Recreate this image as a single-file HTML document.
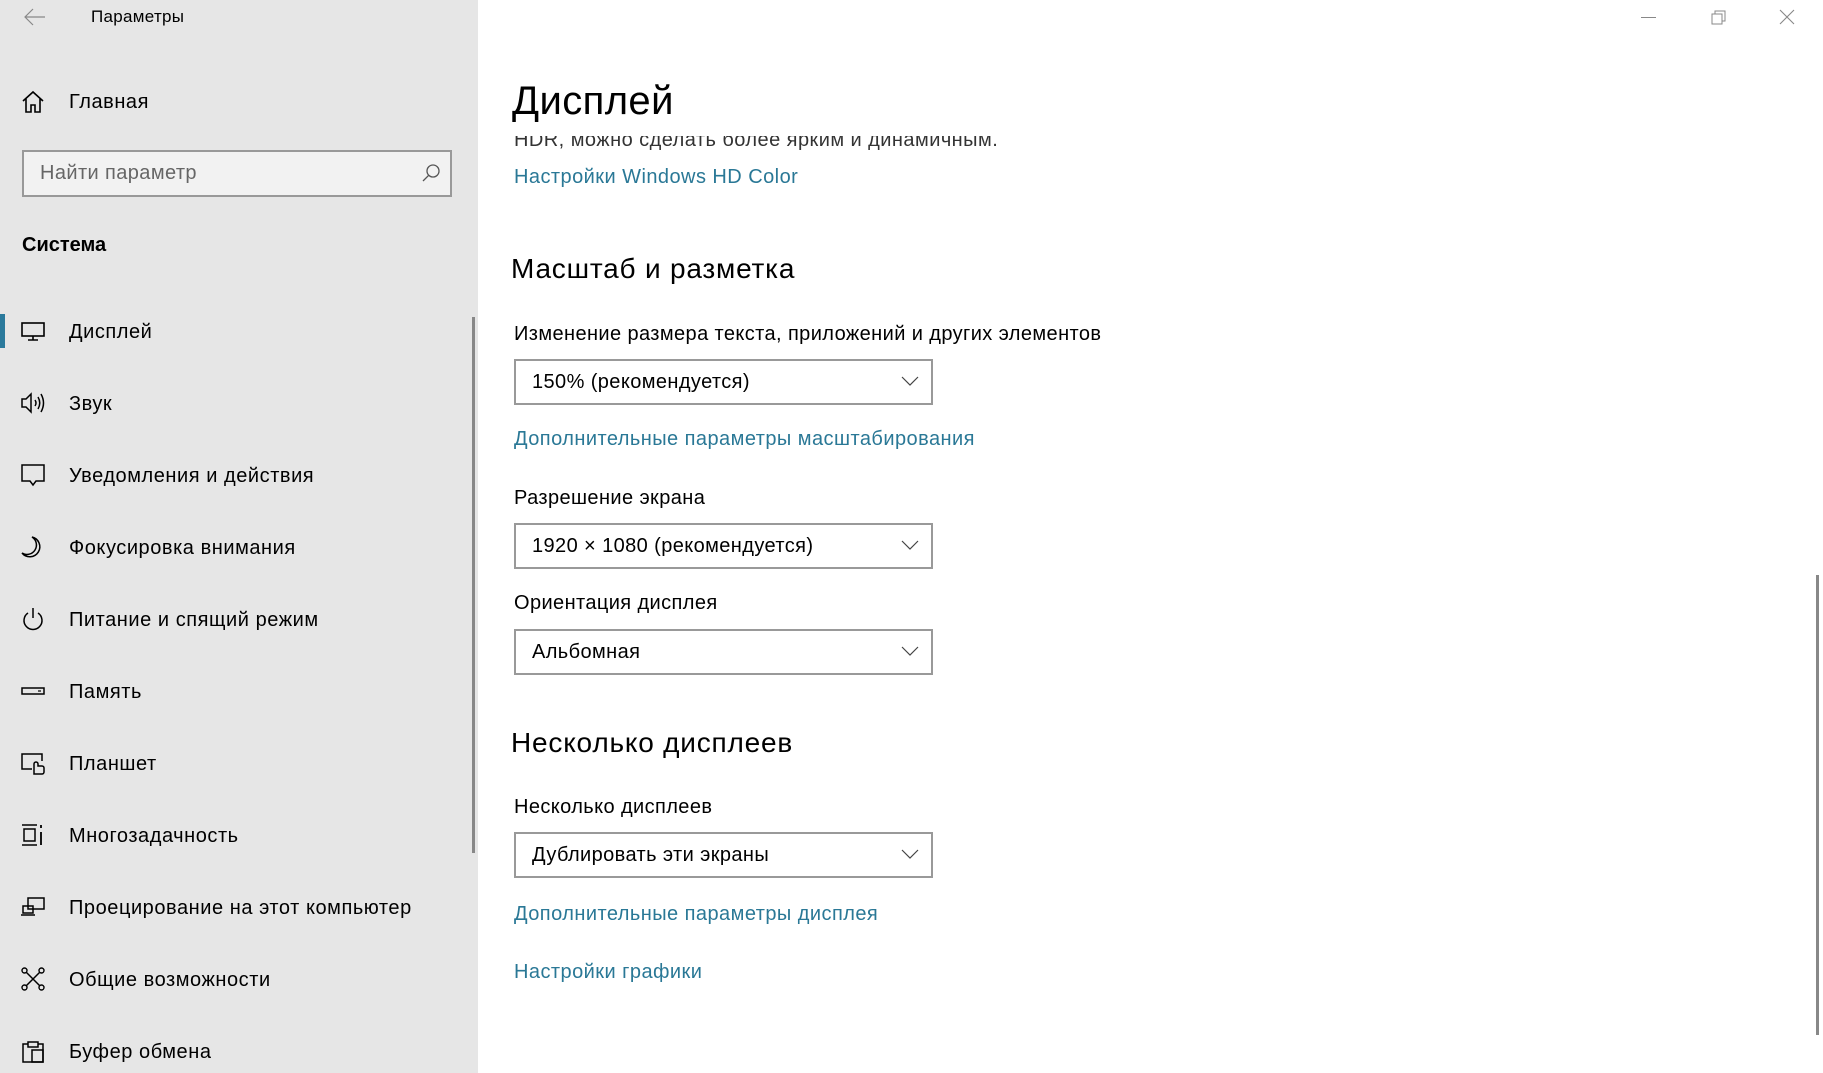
<!DOCTYPE html>
<html><head><meta charset="utf-8"><style>
*{margin:0;padding:0;box-sizing:border-box}
body{width:1823px;height:1073px;overflow:hidden;background:#fff;font-family:"Liberation Sans","DejaVu Sans",sans-serif;color:#000;position:relative}
.a{position:absolute;white-space:nowrap}
.c{line-height:30px;height:30px;margin-top:-15px}
#side{position:absolute;left:0;top:0;width:478px;height:1073px;background:#e6e6e6}
.nav{font-size:20px;left:69px;letter-spacing:0.55px}
.ic{position:absolute;left:20px;width:26px;height:26px;margin-top:-13px}
.link{color:#2a7896;font-size:20px;left:514px;letter-spacing:0.45px}
.lbl{font-size:20px;left:514px;color:#000;letter-spacing:0.4px}
.dd{position:absolute;left:514px;width:419px;height:46px;border:2.5px solid #999;background:#fff;font-size:20px;line-height:42px;padding-left:16px;letter-spacing:0.4px}
.dd svg{position:absolute;right:12px;top:14px}
.h2{font-size:28px;left:511px;letter-spacing:0.8px}
</style></head><body>
<div id="side">
  <svg class="a" style="left:24px;top:8px" width="22" height="18" viewBox="0 0 22 18"><path d="M1 9H21M9 1L1 9L9 17" fill="none" stroke="#888" stroke-width="1.2"/></svg>
  <div class="a c" style="left:91px;top:17px;font-size:17px;letter-spacing:0.3px">Параметры</div>

  <svg class="ic" style="top:102px" viewBox="0 0 26 26"><path d="M3 12L13 3L23 12M6 9.5V23H11V16H15V23H20V9.5" fill="none" stroke="#000" stroke-width="1.6"/></svg>
  <div class="a c nav" style="top:102px">Главная</div>

  <div class="a" style="left:22px;top:150px;width:430px;height:47px;border:2.5px solid #999;background:#f2f2f2"></div>
  <div class="a c" style="left:40px;top:173px;font-size:20px;color:#666;letter-spacing:0.4px">Найти параметр</div>
  <svg class="a" style="left:421px;top:163px" width="20" height="20" viewBox="0 0 20 20"><circle cx="12" cy="8" r="6" fill="none" stroke="#555" stroke-width="1.3"/><path d="M7.7 12.3L2 18" stroke="#555" stroke-width="1.3"/></svg>

  <div class="a c" style="left:22px;top:245px;font-size:20px;font-weight:bold">Система</div>

  <div class="a" style="left:0;top:314px;width:5px;height:34px;background:#2b7a9c"></div>
  <svg class="ic" style="top:331px" viewBox="0 0 26 26"><rect x="2" y="5" width="22" height="13" fill="none" stroke="#000" stroke-width="1.6"/><path d="M13 18V22M8 22H18" stroke="#000" stroke-width="1.6"/></svg>
  <div class="a c nav" style="top:332px">Дисплей</div>

  <svg class="ic" style="top:403px" viewBox="0 0 26 26"><path d="M2 9H6L11 4V22L6 17H2Z" fill="none" stroke="#000" stroke-width="1.5"/><path d="M15 10Q17 13 15 16M18 7Q21.5 13 18 19M21 4Q26 13 21 22" fill="none" stroke="#000" stroke-width="1.5"/></svg>
  <div class="a c nav" style="top:404px">Звук</div>

  <svg class="ic" style="top:475px" viewBox="0 0 26 26"><path d="M2 3H24V19H16L13 23L10 19H2Z" fill="none" stroke="#000" stroke-width="1.5"/></svg>
  <div class="a c nav" style="top:476px">Уведомления и действия</div>

  <svg class="ic" style="top:547px" viewBox="0 0 26 26"><path d="M12 3A10 10 0 1 1 2 19A9 9 0 0 0 12 3Z" fill="none" stroke="#000" stroke-width="1.5"/></svg>
  <div class="a c nav" style="top:548px">Фокусировка внимания</div>

  <svg class="ic" style="top:619px" viewBox="0 0 26 26"><path d="M8 7A9 9 0 1 0 18 7" fill="none" stroke="#000" stroke-width="1.5"/><path d="M13 2V12" stroke="#000" stroke-width="1.5"/></svg>
  <div class="a c nav" style="top:620px">Питание и спящий режим</div>

  <svg class="ic" style="top:691px" viewBox="0 0 26 26"><rect x="2" y="10" width="22" height="6" fill="none" stroke="#000" stroke-width="1.5"/><path d="M18 13H21" stroke="#000" stroke-width="1.2"/></svg>
  <div class="a c nav" style="top:692px">Память</div>

  <svg class="ic" style="top:763px" viewBox="0 0 26 26"><path d="M12 19H2V4H22V11" fill="none" stroke="#000" stroke-width="1.5"/><path d="M14 24V14A2 2 0 0 1 18 14V16H22A2 2 0 0 1 24 18V22A2 2 0 0 1 22 24Z" fill="none" stroke="#000" stroke-width="1.5"/></svg>
  <div class="a c nav" style="top:764px">Планшет</div>

  <svg class="ic" style="top:835px" viewBox="0 0 26 26"><path d="M2 3H17M2 23H17M4 7H15V19H4Z" fill="none" stroke="#000" stroke-width="1.5"/><path d="M21 3V6M21 10V23" stroke="#000" stroke-width="1.8"/></svg>
  <div class="a c nav" style="top:836px">Многозадачность</div>

  <svg class="ic" style="top:907px" viewBox="0 0 26 26"><rect x="8" y="4" width="16" height="11" fill="none" stroke="#000" stroke-width="1.5"/><path d="M3 12H13V19H3ZM1 21H15" fill="none" stroke="#000" stroke-width="1.5"/></svg>
  <div class="a c nav" style="top:908px">Проецирование на этот компьютер</div>

  <svg class="ic" style="top:979px" viewBox="0 0 26 26"><path d="M6 6L20 20M20 6L6 20" stroke="#000" stroke-width="1.5"/><circle cx="4.5" cy="4.5" r="2.5" fill="#e6e6e6" stroke="#000" stroke-width="1.4"/><circle cx="21.5" cy="4.5" r="2.5" fill="#e6e6e6" stroke="#000" stroke-width="1.4"/><circle cx="4.5" cy="21.5" r="2.5" fill="#e6e6e6" stroke="#000" stroke-width="1.4"/><circle cx="21.5" cy="21.5" r="2.5" fill="#e6e6e6" stroke="#000" stroke-width="1.4"/></svg>
  <div class="a c nav" style="top:980px">Общие возможности</div>

  <svg class="ic" style="top:1051px" viewBox="0 0 26 26"><path d="M8 6H3V24H23V6H18M8 4H18V9H8Z" fill="none" stroke="#000" stroke-width="1.5"/><path d="M12 12H23V24H12Z" fill="none" stroke="#000" stroke-width="1.5"/></svg>
  <div class="a c nav" style="top:1052px">Буфер обмена</div>

  <div class="a" style="left:472px;top:317px;width:3px;height:536px;background:#888"></div>
</div>

<div class="a" style="left:1641px;top:17px;width:15px;height:1px;background:#888"></div>
<svg class="a" style="left:1711px;top:10px" width="15" height="15" viewBox="0 0 15 15"><rect x="1" y="4" width="10" height="10" fill="none" stroke="#888"/><path d="M4 4V1H14V11H11" fill="none" stroke="#888"/></svg>
<svg class="a" style="left:1779px;top:9px" width="16" height="16" viewBox="0 0 16 16"><path d="M1 1L15 15M15 1L1 15" stroke="#888" stroke-width="1.1"/></svg>

<div class="a" style="left:514px;top:136px;width:600px;height:18px;overflow:hidden">
  <div class="a" style="left:0;top:-9px;font-size:20px;color:#333;line-height:26px;letter-spacing:0.45px">HDR, можно сделать более ярким и динамичным.</div>
</div>
<div class="a" style="left:512px;top:76px;font-size:40px;line-height:50px;letter-spacing:0.4px">Дисплей</div>
<div class="a c link" style="top:177px">Настройки Windows HD Color</div>

<div class="a c h2" style="top:269px">Масштаб и разметка</div>
<div class="a c lbl" style="top:334px">Изменение размера текста, приложений и других элементов</div>
<div class="dd" style="top:359px">150% (рекомендуется)<svg width="18" height="12" viewBox="0 0 18 12"><path d="M1 2L9 10L17 2" fill="none" stroke="#444" stroke-width="1.2"/></svg></div>
<div class="a c link" style="top:439px">Дополнительные параметры масштабирования</div>

<div class="a c lbl" style="top:498px">Разрешение экрана</div>
<div class="dd" style="top:523px">1920 × 1080 (рекомендуется)<svg width="18" height="12" viewBox="0 0 18 12"><path d="M1 2L9 10L17 2" fill="none" stroke="#444" stroke-width="1.2"/></svg></div>

<div class="a c lbl" style="top:603px">Ориентация дисплея</div>
<div class="dd" style="top:629px">Альбомная<svg width="18" height="12" viewBox="0 0 18 12"><path d="M1 2L9 10L17 2" fill="none" stroke="#444" stroke-width="1.2"/></svg></div>

<div class="a c h2" style="top:743px">Несколько дисплеев</div>
<div class="a c lbl" style="top:807px">Несколько дисплеев</div>
<div class="dd" style="top:832px">Дублировать эти экраны<svg width="18" height="12" viewBox="0 0 18 12"><path d="M1 2L9 10L17 2" fill="none" stroke="#444" stroke-width="1.2"/></svg></div>
<div class="a c link" style="top:914px">Дополнительные параметры дисплея</div>
<div class="a c link" style="top:972px">Настройки графики</div>

<div class="a" style="left:1816px;top:575px;width:3px;height:460px;background:#888"></div>
</body></html>
